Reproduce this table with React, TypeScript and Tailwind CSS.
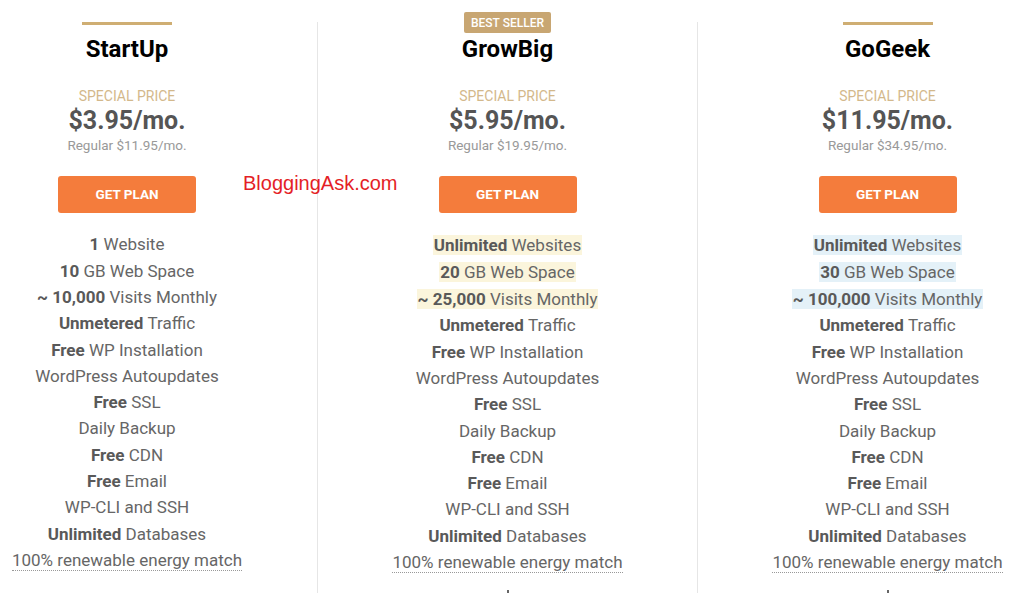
import type { ReactNode } from "react";

type Feature = { bold?: string; text: string; hl?: boolean; dotted?: boolean };

type Plan = {
  name: string;
  price: string;
  regular: string;
  top: "bar" | "badge";
  hl?: string;
  border: boolean;
  dot: boolean;
  features: Feature[];
};

const common: Feature[] = [
  { bold: "Unmetered", text: "Traffic" },
  { bold: "Free", text: "WP Installation" },
  { text: "WordPress Autoupdates" },
  { bold: "Free", text: "SSL" },
  { text: "Daily Backup" },
  { bold: "Free", text: "CDN" },
  { bold: "Free", text: "Email" },
  { text: "WP-CLI and SSH" },
  { bold: "Unlimited", text: "Databases" },
  { text: "100% renewable energy match", dotted: true },
];

const plans: Plan[] = [
  {
    name: "StartUp",
    price: "$3.95/mo.",
    regular: "Regular $11.95/mo.",
    top: "bar",
    border: false,
    dot: false,
    features: [
      { bold: "1", text: "Website" },
      { bold: "10", text: "GB Web Space" },
      { bold: "~ 10,000", text: "Visits Monthly" },
      ...common,
    ],
  },
  {
    name: "GrowBig",
    price: "$5.95/mo.",
    regular: "Regular $19.95/mo.",
    top: "badge",
    hl: "bg-[#fbf5dc]",
    border: true,
    dot: true,
    features: [
      { bold: "Unlimited", text: "Websites", hl: true },
      { bold: "20", text: "GB Web Space", hl: true },
      { bold: "~ 25,000", text: "Visits Monthly", hl: true },
      ...common,
    ],
  },
  {
    name: "GoGeek",
    price: "$11.95/mo.",
    regular: "Regular $34.95/mo.",
    top: "bar",
    hl: "bg-[#e4f1f8]",
    border: true,
    dot: true,
    features: [
      { bold: "Unlimited", text: "Websites", hl: true },
      { bold: "30", text: "GB Web Space", hl: true },
      { bold: "~ 100,000", text: "Visits Monthly", hl: true },
      ...common,
    ],
  },
];

function Row({ f, hl }: { f: Feature; hl?: string }) {
  let inner: ReactNode = (
    <>
      {f.bold && <b className="font-bold text-[#595959]">{f.bold} </b>}
      {f.text}
    </>
  );
  if (f.hl) inner = <span className={`px-[1px] ${hl}`}>{inner}</span>;
  if (f.dotted) inner = <span className="border-b border-dotted border-[#999]">{inner}</span>;
  return (
    <div className={`flex items-center justify-center ${f.hl ? "h-[27px]" : "h-[26.3px]"}`}>
      <span>{inner}</span>
    </div>
  );
}

function PlanColumn({ plan }: { plan: Plan }) {
  return (
    <div className={`w-[380px] shrink-0 flex flex-col items-center ${plan.border ? "border-l border-[#e6e6e6]" : ""}`}>
      <div className="-mt-[22px] h-[34px] flex flex-col justify-end items-center">
        {plan.top === "bar" ? (
          <div className="w-[90px] h-[3px] bg-[#cfae73] mb-[9px]" />
        ) : (
          <div className="mb-[1px] h-[21px] px-[7px] flex items-center rounded-[2px] bg-[#c8a672] text-white text-[12px] font-medium">
            BEST SELLER
          </div>
        )}
      </div>
      <h2 className="text-[24px] leading-[30px] font-bold text-black">{plan.name}</h2>
      <div className="mt-[24px] text-[14px] leading-[16px] text-[#d3b88b]">SPECIAL PRICE</div>
      <div className="mt-[2px] text-[25px] leading-[30px] font-bold text-[#555]">{plan.price}</div>
      <div className="text-[13.5px] leading-[18px] text-[#999]">{plan.regular}</div>
      <button className="mt-[22px] w-[138px] h-[37px] rounded-[3px] bg-[#f47c3c] text-white text-[13.5px] font-bold">
        GET PLAN
      </button>
      <div className="mt-[19px] w-full text-[17px] text-[#666]">
        {plan.features.map((f, i) => (
          <Row key={i} f={f} hl={plan.hl} />
        ))}
      </div>
      {plan.dot && <div className="mt-[14px] w-[2px] h-[3px] bg-[#666]" />}
    </div>
  );
}

export default function App() {
  return (
    <div className="relative w-[1024px] h-[593px] overflow-hidden bg-white font-['Roboto',sans-serif]">
      <div className="flex -ml-[63px] pt-[22px]">
        {plans.map((p) => (
          <PlanColumn key={p.name} plan={p} />
        ))}
      </div>
      {/* watermark */}
      <div className="absolute left-[243px] top-[172px] text-[20px] leading-[22px] text-[#e41e26] font-['Liberation_Sans',Arial,sans-serif]">
        BloggingAsk.com
      </div>
    </div>
  );
}
